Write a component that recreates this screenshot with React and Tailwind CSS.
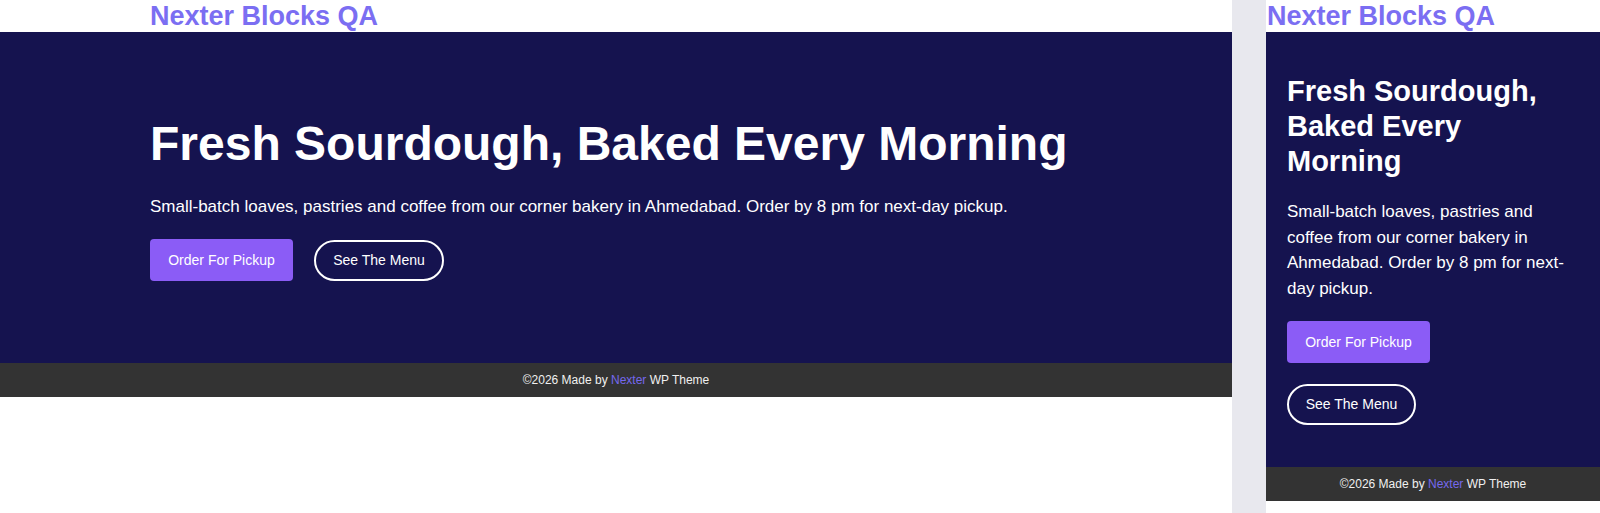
const Hero = ({ compact }) => {
  if (compact) {
    return (
      <div className="bg-[#15134f] px-[21px] pt-[42px] pb-[42px]">
        <h2 className="text-[29px] leading-[1.2] font-bold text-white">
          Fresh Sourdough, Baked Every Morning
        </h2>
        <p className="mt-[21px] text-[17px] leading-[1.5] text-white">
          Small-batch loaves, pastries and coffee from our corner bakery in Ahmedabad. Order by 8 pm for next-day pickup.
        </p>
        <div className="mt-[20px] flex flex-col items-start gap-[21px]">
          <button className="h-[42px] w-[143px] rounded-[4px] bg-[#8b5cf6] text-[14px] text-white">
            Order For Pickup
          </button>
          <button className="h-[41px] w-[129px] rounded-full border-2 border-white text-[14px] text-white">
            See The Menu
          </button>
        </div>
      </div>
    );
  }
  return (
    <div className="bg-[#15134f] px-[150px] pt-[83px] pb-[82px]">
      <h2 className="text-[48px] leading-[1.2] font-bold text-white">
        Fresh Sourdough, Baked Every Morning
      </h2>
      <p className="mt-[21px] text-[17px] leading-[1.5] text-white">
        Small-batch loaves, pastries and coffee from our corner bakery in Ahmedabad. Order by 8 pm for next-day pickup.
      </p>
      <div className="mt-[20px] flex items-center gap-[21px]">
        <button className="h-[42px] w-[143px] rounded-[4px] bg-[#8b5cf6] text-[14px] text-white">
          Order For Pickup
        </button>
        <button className="h-[41px] w-[130px] rounded-full border-2 border-white text-[14px] text-white">
          See The Menu
        </button>
      </div>
    </div>
  );
};

const Footer = () => (
  <div className="flex h-[34px] items-center justify-center bg-[#333333] text-[12px] text-[#f0f0f0]">
    <span>
      ©2026 Made by <span className="text-[#7568ee]">Nexter</span> WP Theme
    </span>
  </div>
);

const Preview = ({ compact }) => (
  <div className="bg-white">
    <h1
      className={`text-[27px] leading-8 font-bold text-[#7b6ef2] ${
        compact ? "pl-px" : "pl-[150px]"
      }`}
    >
      Nexter Blocks QA
    </h1>
    <Hero compact={compact} />
    <Footer />
  </div>
);

export default function App() {
  return (
    <div
      className="flex min-h-screen bg-white"
      style={{ fontFamily: '"Liberation Sans", Arial, sans-serif' }}
    >
      <div className="w-[1232px] shrink-0 bg-white">
        <Preview />
      </div>
      <div className="w-[34px] shrink-0 bg-[#e8e8ee]" />
      <div className="w-[334px] shrink-0 bg-white">
        <Preview compact />
      </div>
    </div>
  );
}
